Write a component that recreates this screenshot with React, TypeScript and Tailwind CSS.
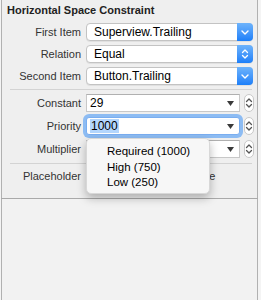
import React from "react";

const font = { fontFamily: '"Helvetica Neue", "Liberation Sans", Arial, sans-serif' };

function ChevronDown() {
  return (
    <svg width="8" height="5" viewBox="0 0 8 5">
      <path d="M1 1 L4 4 L7 1" fill="none" stroke="white" strokeWidth="1.4" strokeLinecap="round" strokeLinejoin="round" />
    </svg>
  );
}

function UpDown({ color = "white" }: { color?: string }) {
  return (
    <svg width="8" height="12" viewBox="0 0 8 12">
      <path d="M1.5 4.5 L4 2 L6.5 4.5" fill="none" stroke={color} strokeWidth="1.3" strokeLinecap="round" strokeLinejoin="round" />
      <path d="M1.5 7.5 L4 10 L6.5 7.5" fill="none" stroke={color} strokeWidth="1.3" strokeLinecap="round" strokeLinejoin="round" />
    </svg>
  );
}

function Popup({ value, updown }: { value: string; updown?: boolean }) {
  return (
    <div className="flex h-[18px] w-[167px] items-stretch rounded-[4px] border border-[#c3c3c3] bg-white shadow-[0_1px_0_rgba(0,0,0,0.06)]">
      <div className="flex flex-1 items-center pl-[7px] text-[12px] text-black">{value}</div>
      <div className="-my-px -mr-px flex w-[16px] items-center justify-center rounded-r-[4px] bg-gradient-to-b from-[#6db3fb] to-[#1b7ff9]">
        {updown ? <UpDown /> : <ChevronDown />}
      </div>
    </div>
  );
}

function Stepper() {
  return (
    <div className="flex h-[18px] w-[10px] flex-col items-center justify-center rounded-[5px] border border-[#c8c8c8] bg-white">
      <UpDown color="#555" />
    </div>
  );
}

function Combo({ value, focused }: { value: string; focused?: boolean }) {
  return (
    <div className="flex items-center gap-[4px]">
      <div
        className={
          "flex h-[18px] w-[154px] items-center border bg-white pl-[3px] pr-[5px] text-[12px] text-black " +
          (focused
            ? "rounded-[3px] border-[#7aaef0] ring-[3px] ring-[#8dbcf3]"
            : "border-[#c8c8c8] border-t-[#b0b0b0]")
        }
      >
        <div className="flex-1">
          {focused ? <span className="bg-[#b3d6fd] px-px">{value}</span> : value}
        </div>
        <svg width="7" height="5" viewBox="0 0 7 5">
          <path d="M0 0 H7 L3.5 5 Z" fill="#3a3a3a" />
        </svg>
      </div>
      <Stepper />
    </div>
  );
}

function Row({ label, children }: { label: string; children: React.ReactNode }) {
  return (
    <div className="flex h-[18px] items-center">
      <div className="w-[80px] pr-[1px] text-right text-[11px] text-[#333]">{label}</div>
      <div className="ml-[4px]">{children}</div>
    </div>
  );
}

export default function App() {
  return (
    <div className="relative h-[300px] w-[261px] bg-[#f4f4f4]" style={font}>
      <div className="ml-px flex h-[300px] w-[257px] flex-col border-x border-[#b1b1b1] bg-[#efefef]">
        <div className="flex h-[198px] flex-col">
          <div className="pl-[5px] pt-[4px] text-[11px] font-bold leading-[13px] text-[#222]">
            Horizontal Space Constraint
          </div>
          <div className="mt-[6px] flex flex-col gap-[4px]">
            <Row label="First Item"><Popup value="Superview.Trailing" /></Row>
            <Row label="Relation"><Popup value="Equal" updown /></Row>
            <Row label="Second Item"><Popup value="Button.Trailing" /></Row>
          </div>
          <div className="ml-[8px] mr-[5px] mt-[4px] h-px bg-[#d3d3d3]" />
          <div className="mt-[4px] flex flex-col gap-[5px]">
            <Row label="Constant"><Combo value="29" /></Row>
            <Row label="Priority"><Combo value="1000" focused /></Row>
            <Row label="Multiplier"><Combo value="1" /></Row>
          </div>
          <div className="ml-[8px] mr-[5px] mt-[5px] h-px bg-[#d3d3d3]" />
          <div className="mt-[3px]">
            <Row label="Placeholder">
              <div className="flex items-center gap-[6px] text-[11px] text-[#333]">
                <div className="ml-[8px] h-[12px] w-[12px] rounded-[3px] border border-[#b0b0b0] bg-white" />
                <span>Remove at build time</span>
              </div>
            </Row>
          </div>
        </div>
        <div className="-mx-px h-px bg-[#a9a9a9]" />
        <div className="flex-1 bg-[#f2f2f2]" />
      </div>
      <div className="absolute left-[86px] top-[138px] flex h-[56px] w-[124px] flex-col rounded-[5px] border border-[#d8d8d8] bg-[#f7f7f7] pt-[5px] text-[11.5px] text-black shadow-[0_4px_10px_rgba(0,0,0,0.28)]">
        <div className="flex h-[15.5px] items-center pl-[20px]">Required (1000)</div>
        <div className="flex h-[15.5px] items-center pl-[20px]">High (750)</div>
        <div className="flex h-[15.5px] items-center pl-[20px]">Low (250)</div>
      </div>
    </div>
  );
}
